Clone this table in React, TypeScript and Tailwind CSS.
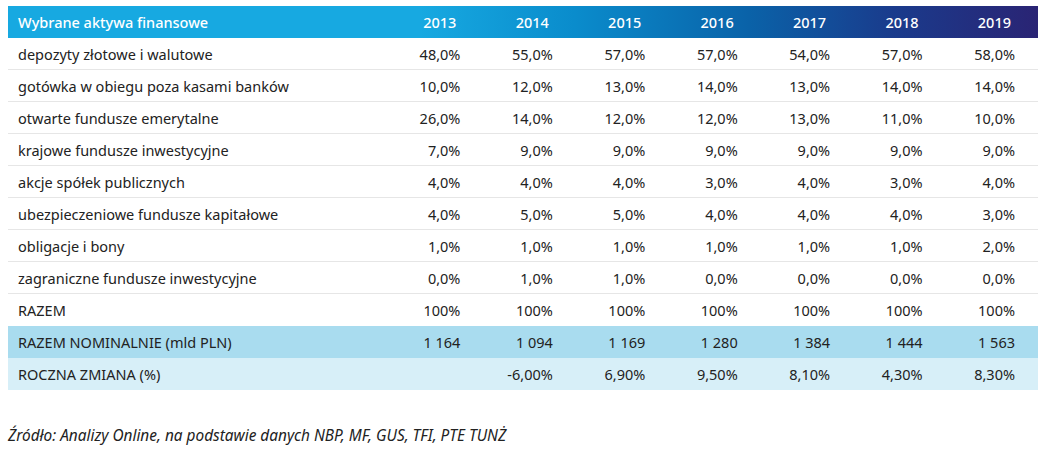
const years = ["2013", "2014", "2015", "2016", "2017", "2018", "2019"];

type Row = { label: string; values: string[]; tone?: "mid" | "light" };

const rows: Row[] = [
  { label: "depozyty złotowe i walutowe", values: ["48,0%", "55,0%", "57,0%", "57,0%", "54,0%", "57,0%", "58,0%"] },
  { label: "gotówka w obiegu poza kasami banków", values: ["10,0%", "12,0%", "13,0%", "14,0%", "13,0%", "14,0%", "14,0%"] },
  { label: "otwarte fundusze emerytalne", values: ["26,0%", "14,0%", "12,0%", "12,0%", "13,0%", "11,0%", "10,0%"] },
  { label: "krajowe fundusze inwestycyjne", values: ["7,0%", "9,0%", "9,0%", "9,0%", "9,0%", "9,0%", "9,0%"] },
  { label: "akcje spółek publicznych", values: ["4,0%", "4,0%", "4,0%", "3,0%", "4,0%", "3,0%", "4,0%"] },
  { label: "ubezpieczeniowe fundusze kapitałowe", values: ["4,0%", "5,0%", "5,0%", "4,0%", "4,0%", "4,0%", "3,0%"] },
  { label: "obligacje i bony", values: ["1,0%", "1,0%", "1,0%", "1,0%", "1,0%", "1,0%", "2,0%"] },
  { label: "zagraniczne fundusze inwestycyjne", values: ["0,0%", "1,0%", "1,0%", "0,0%", "0,0%", "0,0%", "0,0%"] },
  { label: "RAZEM", values: ["100%", "100%", "100%", "100%", "100%", "100%", "100%"] },
  { label: "RAZEM NOMINALNIE (mld PLN)", values: ["1 164", "1 094", "1 169", "1 280", "1 384", "1 444", "1 563"], tone: "mid" },
  { label: "ROCZNA ZMIANA (%)", values: ["", "-6,00%", "6,90%", "9,50%", "8,10%", "4,30%", "8,30%"], tone: "light" },
];

export default function App() {
  return (
    <div className="w-[1042px] h-[453px] bg-white pt-[6px] px-[8px] text-[#222] font-['Noto_Sans',sans-serif] text-[14.5px]">
      {/* Header */}
      <div className="grid grid-cols-[383px_repeat(7,1fr)] h-[32px] pt-[2px] items-center text-white font-medium w-[1030px] bg-[linear-gradient(90deg,#17a9e1_0%,#17a9e1_40%,#0a8ccc_55%,#0a62a8_72%,#1a3b8c_86%,#2a2474_100%)]">
        <div className="pl-[10px]">Wybrane aktywa finansowe</div>
        {years.map((y) => (
          <div key={y} className="text-right pr-[27px]">
            {y}
          </div>
        ))}
      </div>

      {/* Body */}
      <div className="w-[1030px]">
        {rows.map((row, i) => (
          <div
            key={row.label}
            className={
              "grid grid-cols-[383px_repeat(7,1fr)] h-[32px] pt-[2px] items-center " +
              (row.tone === "mid"
                ? "bg-[#a9dcef]"
                : row.tone === "light"
                ? "bg-[#d7eff8]"
                : i < 8
                ? "border-b border-[#e6e6e6]"
                : "")
            }
          >
            <div className="pl-[10px]">{row.label}</div>
            {row.values.map((v, j) => (
              <div key={j} className="text-right pr-[23px]">
                {v}
              </div>
            ))}
          </div>
        ))}
      </div>

      <p className="mt-[34px] italic text-[15.4px]">
        Źródło: Analizy Online, na podstawie danych NBP, MF, GUS, TFI, PTE TUNŻ
      </p>
    </div>
  );
}
